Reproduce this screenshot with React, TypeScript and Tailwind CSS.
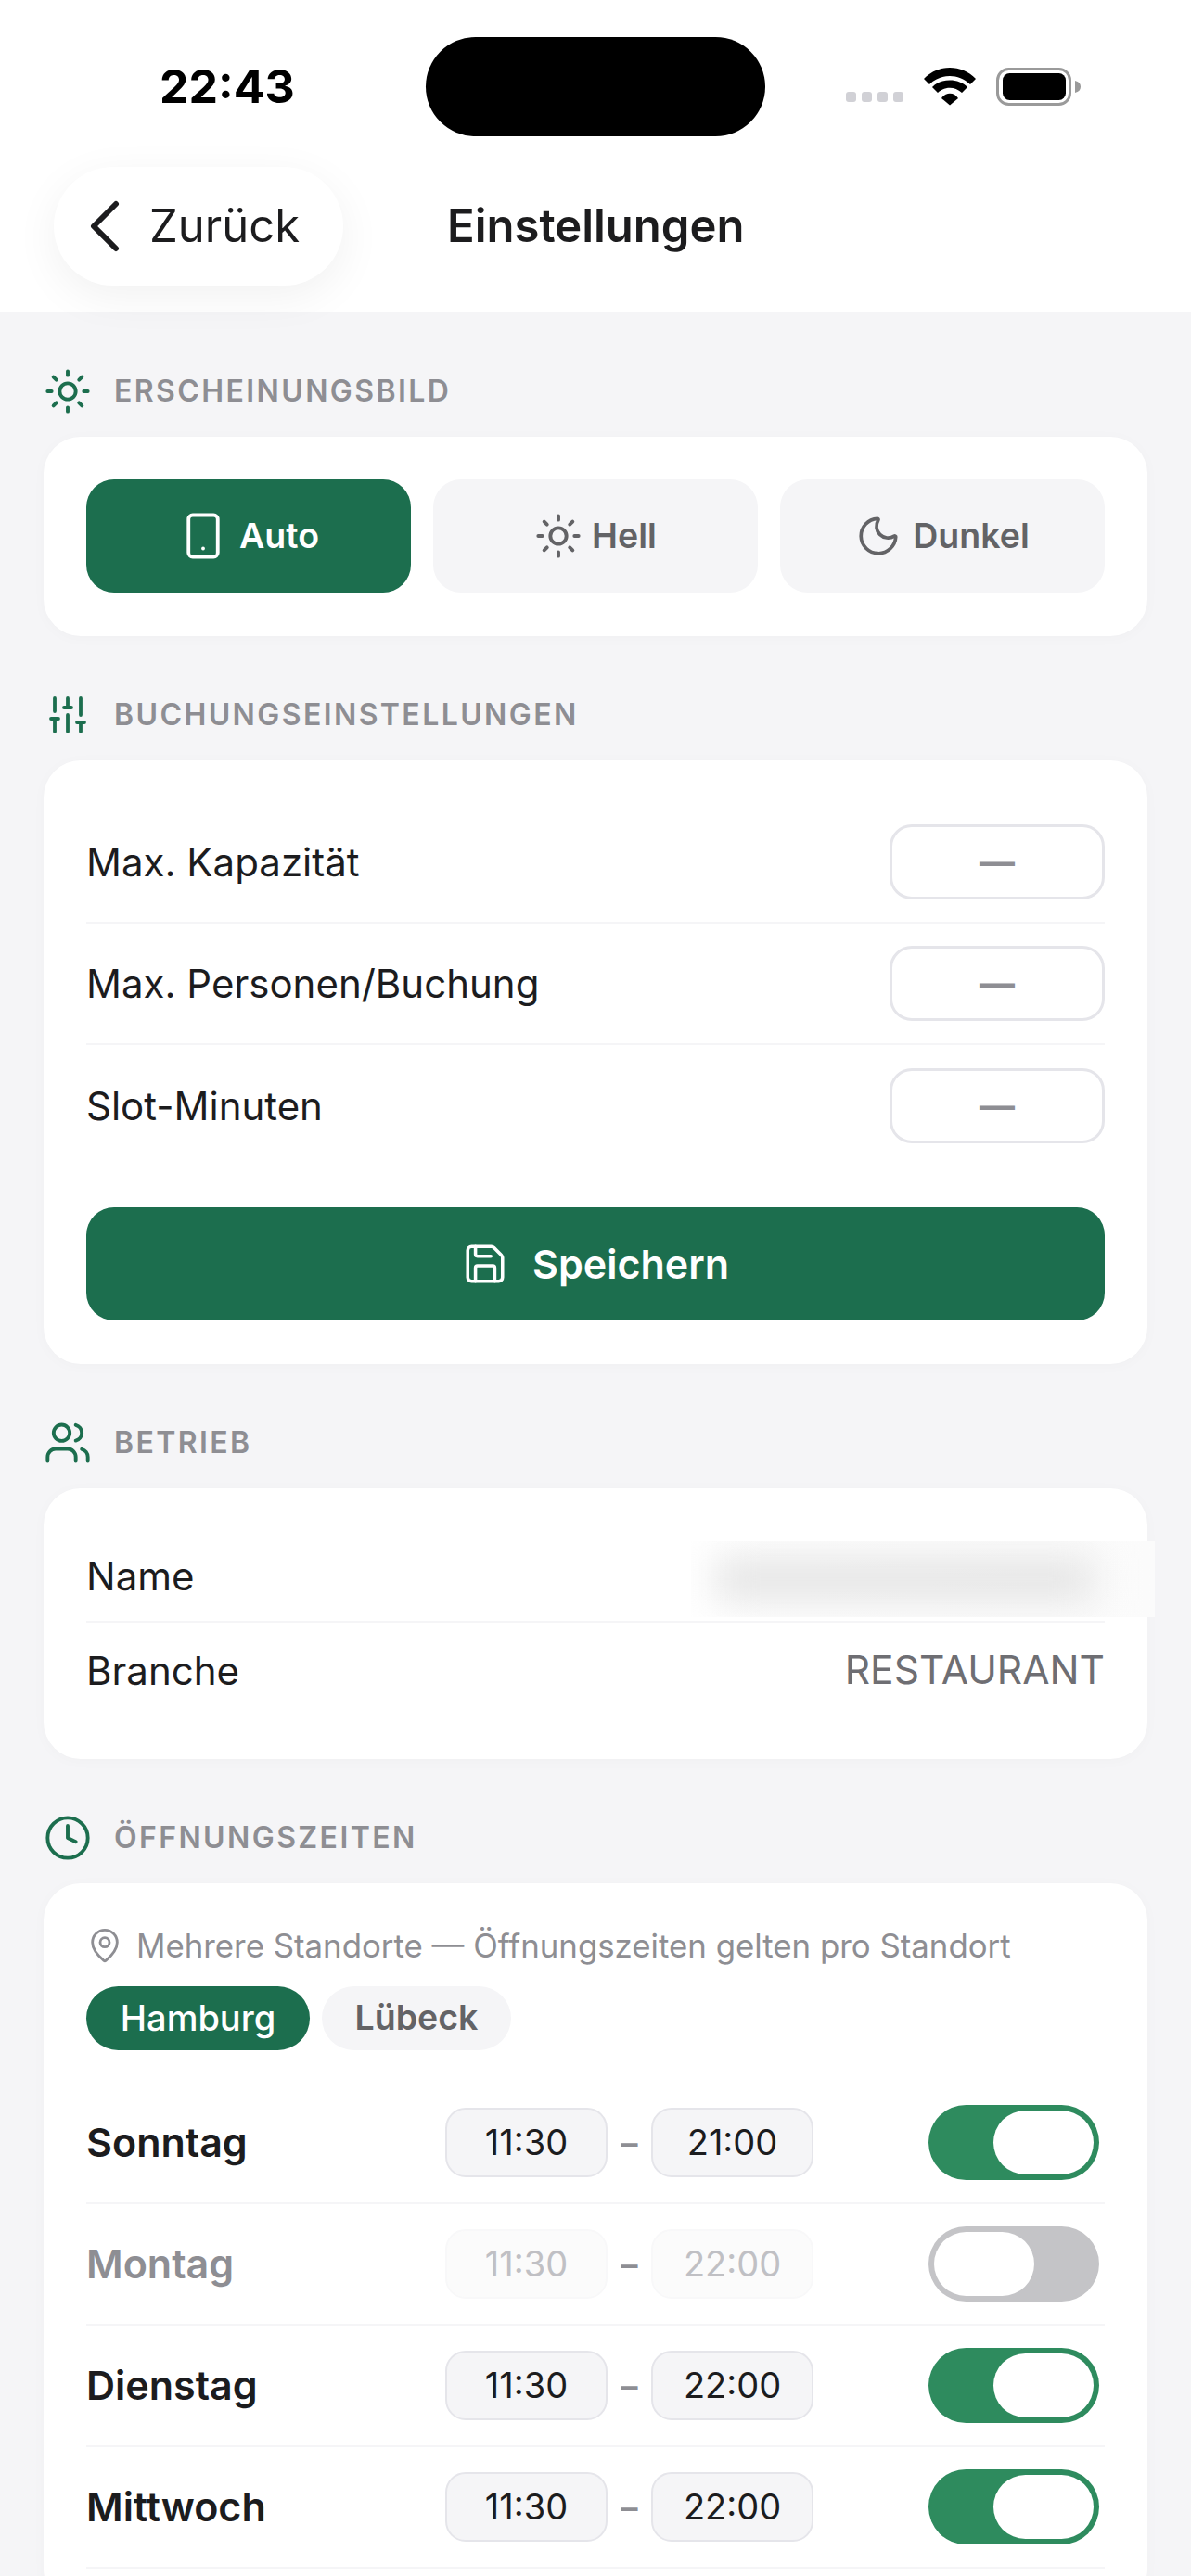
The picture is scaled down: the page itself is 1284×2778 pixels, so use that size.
import type { ReactNode } from 'react';
import { ChevronLeft, Clock, MapPin, Moon, Save, SlidersVertical, Smartphone, Sun, Users } from 'lucide-react';

const limits = ['Max. Kapazität', 'Max. Personen/Buchung', 'Slot-Minuten'];

const hours = [
  { day: 'Sonntag', from: '11:30', to: '21:00', open: true },
  { day: 'Montag', from: '11:30', to: '22:00', open: false },
  { day: 'Dienstag', from: '11:30', to: '22:00', open: true },
  { day: 'Mittwoch', from: '11:30', to: '22:00', open: true }
];

function StatusIcons() {
  return (
    <div className="flex items-end">
      <div className="flex gap-[6px] mb-[4px] mr-[22px]">
        {[0, 1, 2, 3].map(i => (
          <div key={i} className="w-[11px] h-[11px] rounded-[3px] bg-[#d1d1d6]" />
        ))}
      </div>
      <svg width="56" height="41" viewBox="0 0 56 41" className="mr-[22px]">
        <path d="M0 12 C15 -4 41 -4 56 12 L50 18 C37 6 19 6 6 18 Z" fill="#000" />
        <path d="M9 21 C18 11 38 11 47 21 L41 27 C33 20 23 20 15 27 Z" fill="#000" />
        <path d="M19 33 C23 26 33 26 37 33 L28 40.5 Z" fill="#000" />
      </svg>
      <svg width="92" height="41" viewBox="0 0 92 41">
        <rect x="1.5" y="1.5" width="78" height="38" rx="12" fill="none" stroke="#9a9a9a" strokeWidth="3" />
        <rect x="7" y="6" width="68" height="29" rx="7.5" fill="#000" />
        <path d="M85 14 C89 15 91 17 91 20.5 C91 24 89 26 85 27 Z" fill="#9a9a9a" />
      </svg>
    </div>
  );
}

function SectionLabel({ icon, title }: { icon: ReactNode; title: string }) {
  return (
    <div className="h-[48px] mb-[25px] flex items-center gap-[24px]">
      <div className="w-[52px] flex justify-center text-[#1c6e4e]">{icon}</div>
      <span className="text-[32px] font-semibold tracking-[2.4px] text-[#8e8e93]">{title}</span>
    </div>
  );
}

function Card({ className, children }: { className: string; children: ReactNode }) {
  return (
    <div className={`bg-white rounded-[40px] px-[46px] shadow-[0_2px_16px_rgba(0,0,0,0.025)] ${className}`}>
      {children}
    </div>
  );
}

function TimeBox({ value, open }: { value: string; open: boolean }) {
  return (
    <div
      className={
        open
          ? 'w-[175px] h-[75px] rounded-[22px] border-2 border-[#e5e5ea] bg-[#f5f5f7] flex items-center justify-center text-[38px] text-[#1c1c1e]'
          : 'w-[175px] h-[75px] rounded-[22px] border-2 border-[#f8f8f9] bg-[#fbfbfb] flex items-center justify-center text-[38px] text-[#c0c0c4]'
      }
    >
      {value}
    </div>
  );
}

export default function App() {
  return (
    <div className="w-[1284px] h-[2778px] overflow-hidden bg-[#f5f5f7] font-['Inter',sans-serif] text-[#1c1c1e]">
      {/* Header */}
      <div className="relative z-10 bg-white h-[337px]">
        <div className="h-[180px] pt-[40px] pl-[172px] pr-[118px] flex items-start">
          <span className="w-[287px] h-[107px] flex items-center text-[50px] font-bold text-black">22:43</span>
          <div className="w-[366px] h-[107px] rounded-full bg-black" />
          <div className="ml-auto mt-[33px]">
            <StatusIcons />
          </div>
        </div>
        <div className="pl-[58px] flex items-center gap-[112px]">
          <div className="w-[312px] h-[128px] rounded-full bg-white shadow-[0_12px_48px_rgba(0,0,0,0.06)] flex items-center pl-[7px]">
            <ChevronLeft size={96} strokeWidth={1.5} />
            <span className="text-[49px]">Zurück</span>
          </div>
          <span className="text-[49px] font-semibold">Einstellungen</span>
        </div>
      </div>

      <div className="px-[47px] pt-[61px]">
        {/* Erscheinungsbild */}
        <SectionLabel icon={<Sun size={52} strokeWidth={1.8} />} title="ERSCHEINUNGSBILD" />
        <Card className="pt-[46px] pb-[47px] flex gap-[24px]">
          <div className="flex-1 h-[122px] rounded-[30px] bg-[#1c6e4e] text-white flex items-center justify-center gap-[12px]">
            <Smartphone size={54} strokeWidth={1.7} />
            <span className="text-[37.5px] font-semibold">Auto</span>
          </div>
          <div className="flex-1 h-[122px] rounded-[30px] bg-[#f5f5f7] text-[#636366] flex items-center justify-center gap-[10px]">
            <Sun size={52} strokeWidth={1.8} />
            <span className="text-[37.5px] font-semibold">Hell</span>
          </div>
          <div className="flex-1 h-[122px] rounded-[30px] bg-[#f5f5f7] text-[#636366] flex items-center justify-center gap-[12px]">
            <Moon size={50} strokeWidth={1.8} />
            <span className="text-[37.5px] font-semibold">Dunkel</span>
          </div>
        </Card>

        {/* Buchungseinstellungen */}
        <div className="mt-[61px]">
          <SectionLabel icon={<SlidersVertical size={48} strokeWidth={1.9} />} title="BUCHUNGSEINSTELLUNGEN" />
          <Card className="pt-[45px] pb-[47px]">
            {limits.map((label, i) => (
              <div
                key={label}
                className={`h-[131px] flex items-center justify-between ${i < 2 ? 'border-b-2 border-[#f5f5f7]' : ''}`}
              >
                <span className="text-[42px]">{label}</span>
                <div className="w-[232px] h-[81px] rounded-[24px] border-[3px] border-[#e5e5ea] bg-white flex items-center justify-center text-[38px] font-bold text-[#8e8e93]">
                  —
                </div>
              </div>
            ))}
            <div className="mt-[44px] h-[122px] rounded-[30px] bg-[#1c6e4e] text-white flex items-center justify-center gap-[26px]">
              <Save size={50} strokeWidth={1.7} />
              <span className="text-[43px] font-semibold">Speichern</span>
            </div>
          </Card>
        </div>

        {/* Betrieb */}
        <div className="mt-[61px]">
          <SectionLabel icon={<Users size={52} strokeWidth={1.8} />} title="BETRIEB" />
          <Card className="py-[45px]">
            <div className="relative h-[100px] flex items-center border-b-2 border-[#f5f5f7]">
              <span className="text-[42px]">Name</span>
              {/* redacted value */}
              <div className="absolute left-[652px] top-[12px] w-[500px] h-[82px] overflow-hidden bg-linear-to-r from-white to-[#fbfbfb]">
                <div className="absolute left-[26px] right-[66px] top-[18px] bottom-[18px] bg-[#e4e4e4] blur-[20px]" />
              </div>
            </div>
            <div className="h-[102px] flex items-center justify-between">
              <span className="text-[42px]">Branche</span>
              <span className="text-[42.5px] text-[#6e6e73]">RESTAURANT</span>
            </div>
          </Card>
        </div>

        {/* Öffnungszeiten */}
        <div className="mt-[61px]">
          <SectionLabel icon={<Clock size={52} strokeWidth={1.8} />} title="ÖFFNUNGSZEITEN" />
          <Card className="pt-[50px] pb-[40px]">
            <div className="h-[34px] flex items-center gap-[14px] text-[34.8px] text-[#8e8e93]">
              <MapPin size={40} strokeWidth={1.7} />
              <span>Mehrere Standorte — Öffnungszeiten gelten pro Standort</span>
            </div>
            <div className="mt-[27px] mb-[35px] flex gap-[13px]">
              <div className="w-[241px] h-[69px] rounded-full bg-[#1c6e4e] text-white flex items-center justify-center text-[38px] font-medium">
                Hamburg
              </div>
              <div className="w-[204px] h-[69px] rounded-full bg-[#f5f5f7] text-[#636366] flex items-center justify-center text-[37.5px] font-semibold">
                Lübeck
              </div>
            </div>
            {hours.map(h => (
              <div key={h.day} className="h-[131px] flex items-center border-b-2 border-[#f5f5f7]">
                <span className={`w-[387px] text-[43px] font-semibold ${h.open ? '' : 'text-[#8e8e93]'}`}>{h.day}</span>
                <TimeBox value={h.from} open={h.open} />
                <span className="w-[47px] text-center text-[36px] font-semibold text-[#8e8e93]">–</span>
                <TimeBox value={h.to} open={h.open} />
                <div
                  className={`ml-auto mr-[6px] w-[184px] h-[81px] rounded-full p-[6px] flex ${
                    h.open ? 'justify-end bg-[#2e8b5e]' : 'justify-start bg-[#c4c4c7]'
                  }`}
                >
                  <div className="w-[108px] h-[69px] rounded-full bg-white" />
                </div>
              </div>
            ))}
          </Card>
        </div>
      </div>
    </div>
  );
}
